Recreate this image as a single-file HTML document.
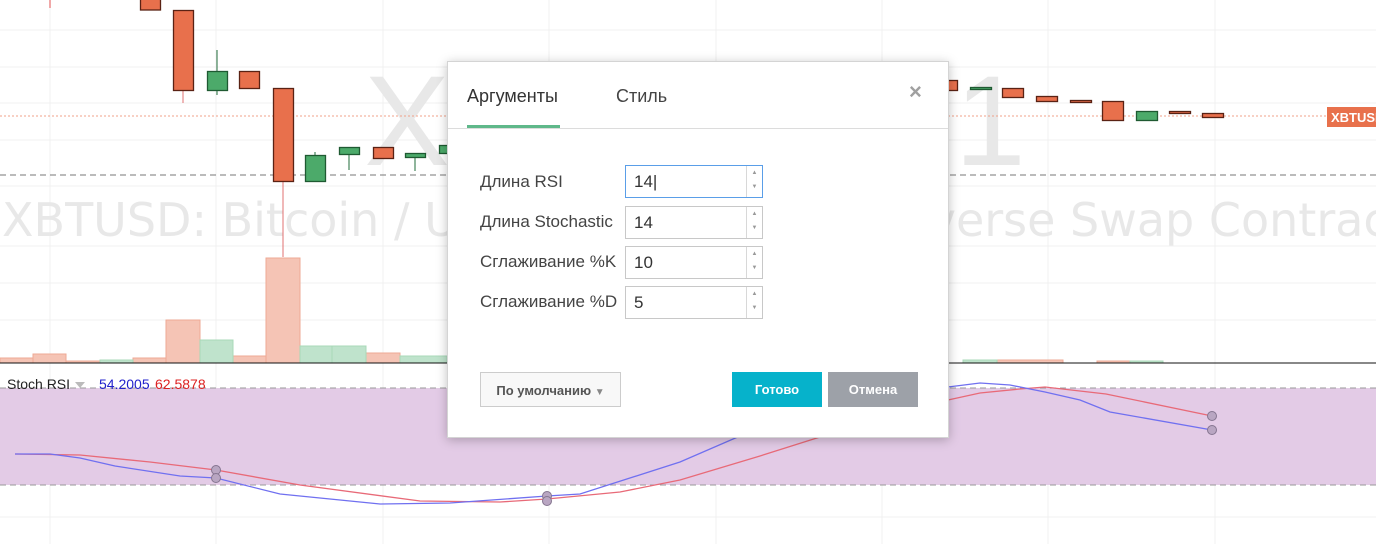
<!DOCTYPE html>
<html><head><meta charset="utf-8"><style>
body{margin:0;width:1376px;height:544px;overflow:hidden;background:#fff;font-family:"Liberation Sans","DejaVu Sans",sans-serif;position:relative}
svg{position:absolute;left:0;top:0}
.dlg{position:absolute;left:447px;top:61px;width:500px;height:375px;background:#fff;border:1px solid #d4d4d4;box-shadow:0 2px 10px rgba(0,0,0,.25);color:#444}
.tab{position:absolute;top:24px;font-size:18px}
.ul{position:absolute;left:19px;top:63px;width:93px;height:3px;background:#5fb88a}
.hl{position:absolute;left:0;top:66px;width:500px;height:1px;background:#dcdcdc}
.x{position:absolute;left:461px;top:17px;font-size:22px;color:#a0a0a0;font-weight:bold}
.lab{position:absolute;left:32px;font-size:17px;color:#444}
.inp{position:absolute;left:177px;width:138px;height:31px;border:1px solid #c8c8c8;font-size:17px;color:#333;box-sizing:border-box}
.inp span{position:absolute;left:8px;top:6px}
.sp{position:absolute;right:0;top:0;width:15px;height:100%;border-left:1px solid #d8d8d8;font-size:6px;color:#999;text-align:center;line-height:14px}
.btn{position:absolute;top:310px;height:35px;font-size:13px;font-weight:bold;text-align:center;line-height:35px;box-sizing:border-box}
</style></head><body>
<svg width="1376" height="544" viewBox="0 0 1376 544">
<g stroke="#f0f0f0" stroke-width="1">
<line x1="50" y1="0" x2="50" y2="544"/><line x1="216" y1="0" x2="216" y2="544"/><line x1="383" y1="0" x2="383" y2="544"/><line x1="549" y1="0" x2="549" y2="544"/><line x1="716" y1="0" x2="716" y2="544"/><line x1="882" y1="0" x2="882" y2="544"/><line x1="1048" y1="0" x2="1048" y2="544"/><line x1="1215" y1="0" x2="1215" y2="544"/>
<line x1="0" y1="30" x2="1376" y2="30"/><line x1="0" y1="67" x2="1376" y2="67"/><line x1="0" y1="103" x2="1376" y2="103"/><line x1="0" y1="140" x2="1376" y2="140"/><line x1="0" y1="186" x2="1376" y2="186"/><line x1="0" y1="246" x2="1376" y2="246"/><line x1="0" y1="283" x2="1376" y2="283"/><line x1="0" y1="320" x2="1376" y2="320"/><line x1="0" y1="517" x2="1376" y2="517"/>
</g>
<text x="695" y="165" font-size="128" fill="#e8e8e8" text-anchor="middle" font-family="Liberation Sans">XBTUSD, 1</text>
<text x="2" y="236" font-size="46" fill="#e8e8e8" font-family="DejaVu Sans">XBTUSD: Bitcoin / US Dollar Perpetual Inverse Swap Contract</text>
<line x1="0" y1="116" x2="1330" y2="116" stroke="#f0a088" stroke-dasharray="2,2"/>
<line x1="0" y1="175" x2="1376" y2="175" stroke="#777" stroke-dasharray="6,4"/>
<g fill="#f5c4b5" stroke="#eeaa95">
<rect x="0" y="358" width="33" height="5"/><rect x="33" y="354" width="33" height="9"/><rect x="66" y="361" width="34" height="2"/><rect x="133" y="358" width="33" height="5"/><rect x="166" y="320" width="34" height="43"/><rect x="233" y="356" width="33" height="7"/><rect x="266" y="258" width="34" height="105"/><rect x="366" y="353" width="34" height="10"/><rect x="997" y="360" width="66" height="3"/><rect x="1097" y="361" width="33" height="2"/>
</g>
<g fill="#bfe3cc" stroke="#a8d8b8">
<rect x="100" y="360" width="33" height="3"/><rect x="200" y="340" width="33" height="23"/><rect x="300" y="346" width="32" height="17"/><rect x="332" y="346" width="34" height="17"/><rect x="400" y="356" width="47" height="7"/><rect x="963" y="360" width="34" height="3"/><rect x="1130" y="361" width="33" height="2"/>
</g>
<g stroke="#6b2a1a" stroke-width="1">
<line x1="50" y1="0" x2="50" y2="8" stroke="#e05050"/>
<line x1="183" y1="90" x2="183" y2="103" stroke="#e07070"/>
<line x1="283" y1="181" x2="283" y2="257" stroke="#e07070"/>
<line x1="217" y1="50" x2="217" y2="95" stroke="#1f6b3a"/>
<line x1="315" y1="152" x2="315" y2="160" stroke="#1f6b3a"/>
<line x1="349" y1="150" x2="349" y2="170" stroke="#1f6b3a"/>
<line x1="415" y1="155" x2="415" y2="171" stroke="#1f6b3a"/>
</g>
<g fill="#e8704c" stroke="#5a2214" stroke-width="1.3">
<rect x="140.5" y="-2" width="20" height="12"/><rect x="173.5" y="10.5" width="20" height="80"/><rect x="239.5" y="71.5" width="20" height="17"/><rect x="273.5" y="88.5" width="20" height="93"/><rect x="373.5" y="147.5" width="20" height="11"/>
<rect x="940.5" y="80.5" width="17" height="10"/><rect x="1002.5" y="88.5" width="21" height="9"/><rect x="1036.5" y="96.5" width="21" height="5"/><rect x="1070.5" y="100.5" width="21" height="2"/><rect x="1102.5" y="101.5" width="21" height="19"/><rect x="1169.5" y="111.5" width="21" height="2"/><rect x="1202.5" y="113.5" width="21" height="4"/>
</g>
<g fill="#4caa6a" stroke="#1f5a32" stroke-width="1.3">
<rect x="207.5" y="71.5" width="20" height="19"/><rect x="305.5" y="155.5" width="20" height="26"/><rect x="339.5" y="147.5" width="20" height="7"/><rect x="405.5" y="153.5" width="20" height="4"/><rect x="439.5" y="145.5" width="20" height="8"/><rect x="970.5" y="87.5" width="21" height="2"/><rect x="1136.5" y="111.5" width="21" height="9"/>
</g>
<rect x="1327" y="107" width="49" height="20" fill="#e8714c"/>
<text x="1331" y="122" font-size="13" font-weight="bold" fill="#fff">XBTUSD</text>
<line x1="0" y1="363" x2="1376" y2="363" stroke="#111"/>
<rect x="0" y="388" width="1376" height="97" fill="#e3cbe6"/>
<line x1="0" y1="388" x2="1376" y2="388" stroke="#999" stroke-dasharray="6,4"/>
<line x1="0" y1="485" x2="1376" y2="485" stroke="#999" stroke-dasharray="6,4"/>
<text x="7" y="389" font-size="14" fill="#222">Stoch RSI</text>
<path d="M75 382 L85 382 L80 388Z" fill="#bbb"/>
<text x="99" y="389" font-size="14" fill="#2222cc">54.2005</text>
<text x="155" y="389" font-size="14" fill="#dd2222">62.5878</text>
<polyline fill="none" stroke="#e86a78" stroke-width="1.3" points="15,454 80,455 150,462 216,470 300,485 420,501 500,502 547,499 620,492 680,480 760,456 820,437 948,400 980,393 1020,389 1045,387 1106,394 1212,416"/>
<polyline fill="none" stroke="#7070f0" stroke-width="1.3" points="15,454 50,454 80,458 115,466 180,476 216,478 280,494 380,504 450,503 547,496 580,494 680,462 740,436 948,387 980,383 1010,385 1045,392 1080,400 1110,412 1212,430"/>
<g fill="#b9a6c2" stroke="#857590" stroke-width="1">
<circle cx="216" cy="470" r="4.5"/><circle cx="216" cy="478" r="4.5"/><circle cx="547" cy="496" r="4.5"/><circle cx="547" cy="501" r="4.5"/><circle cx="1212" cy="416" r="4.5"/><circle cx="1212" cy="430" r="4.5"/>
</g>
</svg>
<div class="dlg">
<div class="tab" style="left:19px;color:#333">Аргументы</div>
<div class="tab" style="left:168px;color:#444">Стиль</div>
<div class="ul"></div><div class="hl"></div>
<div class="x">×</div>
<div class="lab" style="top:110px">Длина RSI</div>
<div class="lab" style="top:150px">Длина Stochastic</div>
<div class="lab" style="top:190px">Сглаживание %K</div>
<div class="lab" style="top:230px">Сглаживание %D</div>
<div class="inp" style="top:103px;height:33px;border-color:#5a9ee8"><span>14|</span><div class="sp">▲<br>▼</div></div>
<div class="inp" style="top:144px;height:33px"><span>14</span><div class="sp">▲<br>▼</div></div>
<div class="inp" style="top:184px;height:33px"><span>10</span><div class="sp">▲<br>▼</div></div>
<div class="inp" style="top:224px;height:33px"><span>5</span><div class="sp">▲<br>▼</div></div>
<div class="btn" style="left:32px;width:141px;border:1px solid #ccc;background:#f8f8f8;color:#555;font-weight:bold">По умолчанию <span style="color:#888;font-size:10px">▼</span></div>
<div class="btn" style="left:284px;width:90px;background:#06b2cb;color:#fff">Готово</div>
<div class="btn" style="left:380px;width:90px;background:#9da1a8;color:#fff">Отмена</div>
</div>
</body></html>
